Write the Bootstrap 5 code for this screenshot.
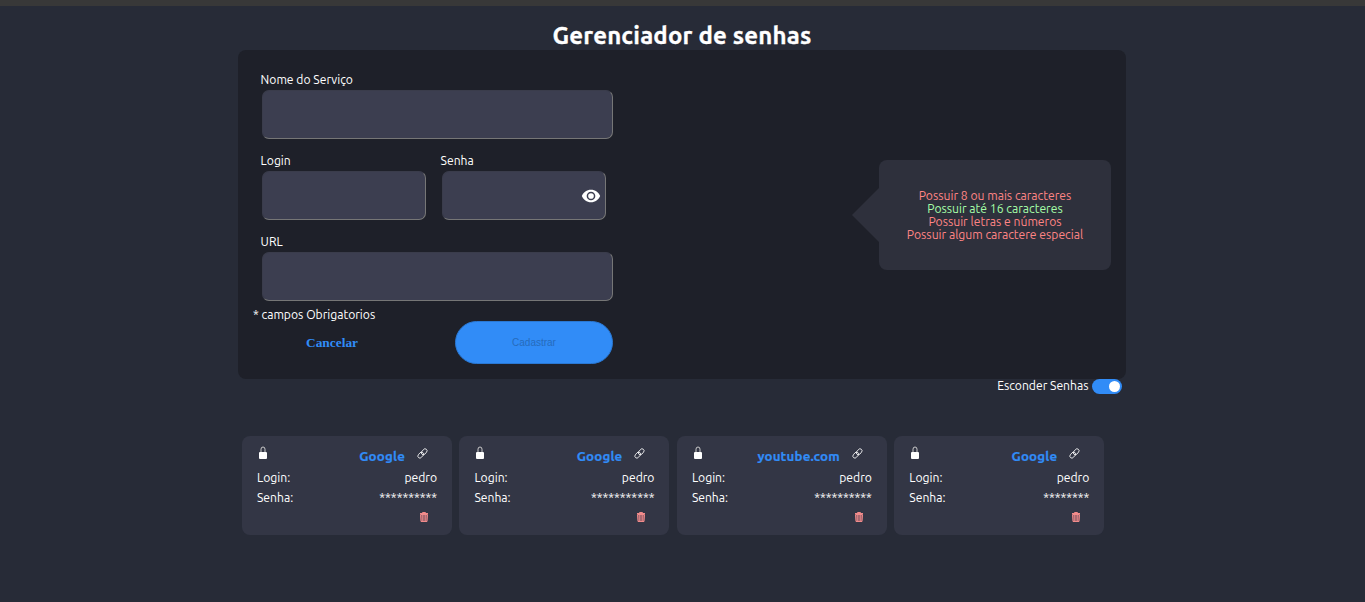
<!DOCTYPE html>
<html lang="pt-BR">
<head>
<meta charset="utf-8">
<meta name="viewport" content="width=device-width, initial-scale=1">
<title>Gerenciador de senhas</title>
<link rel="stylesheet" href="https://cdn.jsdelivr.net/npm/bootstrap@5.3.0/dist/css/bootstrap.min.css">
<style>
  body { background: #272b37; color: #fff; font: 12.15px/15px Ubuntu, "Noto Sans", sans-serif; min-height: 602px; overflow: hidden; }
  .top-strip { height: 6px; background: #383838; }
  .page { width: 888px; margin-left: 238px; }
  h1 { font-size: 24px; line-height: 28px; font-weight: 700; letter-spacing: .17px; -webkit-text-stroke: .3px #fff; margin: 16px 0 0; }
  .panel { height: 329px; background: #1e2029; border-radius: 8px; padding: 22px 15px 15px; }
  .fields { width: 352px; margin-left: 8px; }
  .fields label { display: block; line-height: 15px; height: 18px; margin-left: -.4px; }
  .field-row { height: 81px; }
  .pair { gap: 15px; }
  .half { width: 165px; }
  .fields .form-control { height: 49px; margin-left: 1px; width: calc(100% - 1px); background: #3c3e50; color: #fff; border: 1px solid; border-color: #3a3c4b #767676 #767676 #3a3c4b; border-radius: 7px; font-size: 13px; }
  .eye { position: absolute; right: 5px; top: 33px; width: 20px; height: 20px; padding: 0; border: 0; background: none; line-height: 0; }
  .required-note { height: 14px; margin-top: -8px; }
  .actions { width: 360px; }
  .cancel { color: #318cf7; font: bold 13.4px/15px "Liberation Serif", serif; width: 158px; border: 0; background: none; padding: 0; }
  .submit { width: 158px; height: 43px; border: 1px solid #2a78d3; border-radius: 22px; background: #318cf7; color: #266bbb; font: 10px "Liberation Sans", Arial, sans-serif; padding: 0; }
  .rules { position: relative; width: 232px; height: 110px; margin-top: 88px; background: #2e303c; border-radius: 8px; color: #ff8585; line-height: 13px; }
  .rules::before { content: ""; position: absolute; left: -27px; top: 28px; border: 27px solid transparent; border-left: 0; border-right-color: #2e303c; }
  .rules .ok { color: #a6ffa8; }
  .hide-row { height: 15px; }
  .hide-row > span { margin-top: -1px; }
  .switch { width: 30px; height: 15px; border-radius: 8px; background: #318cf7; padding: 2px; margin: 0 4px 0 3.5px; }
  .switch span { display: block; width: 11px; height: 11px; border-radius: 50%; background: #fff; }
  .entries { margin: 42px 0 0 4px; gap: 7.45px; }
  .entry { width: 210px; height: 99px; flex: none; background: #333645; border-radius: 8px; padding: 10px 15px 0; }
  .entry .head { height: 24px; }
  .entry .site { color: #318cf7; font-weight: 700; font-size: 13.33px; letter-spacing: .16px; -webkit-text-stroke: .2px #318cf7; line-height: 20px; text-decoration: none; margin-top: 1px; }
  .entry .line { height: 20px; line-height: 15px; }
  .lock { margin: 0 auto 0 2px; }
  .chain { margin: 2px 9px 0 12px; }
  .trash { margin: 2px 8px 0 0; }
  svg { display: block; }
</style>
</head>
<body>
<div class="top-strip"></div>
<main class="page">
  <h1 class="text-center">Gerenciador de senhas</h1>
  <section class="panel d-flex justify-content-between">
    <form>
      <div class="fields">
        <div class="field-row"><label for="service">Nome do Serviço</label><input id="service" class="form-control"></div>
        <div class="field-row pair d-flex">
          <div class="half"><label for="login">Login</label><input id="login" class="form-control"></div>
          <div class="half position-relative"><label for="pass">Senha</label><input id="pass" type="password" class="form-control">
            <button class="eye" type="button" aria-label="Mostrar senha"><svg width="20" height="20" viewBox="0 0 24 24" fill="#fff"><path fill-rule="evenodd" d="M12 4.500C7 4.500 2.700 7.600 1 12c1.700 4.400 6 7.500 11 7.500s9.300-3.100 11-7.500c-1.700-4.400-6-7.500-11-7.500zM12 17.200a5.200 5.200 0 1 1 0-10.400 5.200 5.200 0 0 1 0 10.400zM12 8.600a3.400 3.400 0 1 0 0 6.800 3.400 3.400 0 0 0 0-6.800z"/></svg></button>
          </div>
        </div>
        <div class="field-row"><label for="url">URL</label><input id="url" class="form-control"></div>
      </div>
      <div class="required-note">* campos Obrigatorios</div>
      <div class="actions d-flex align-items-center justify-content-between">
        <button class="cancel" type="button">Cancelar</button>
        <button class="submit" type="submit">Cadastrar</button>
      </div>
    </form>
    <div class="rules d-flex flex-column align-items-center justify-content-center">
      <span>Possuir 8 ou mais caracteres</span>
      <span class="ok">Possuir até 16 caracteres</span>
      <span>Possuir letras e números</span>
      <span>Possuir algum caractere especial</span>
    </div>
  </section>
  <div class="hide-row d-flex justify-content-end"><span>Esconder Senhas</span><div class="switch d-flex justify-content-end" role="switch" aria-checked="true"><span></span></div></div>
  <section class="entries d-flex" id="entries"></section>
</main>
<template id="entry">
  <article class="entry">
    <div class="head d-flex">
      <svg class="lock" width="8" height="14" viewBox="0 0 8 14"><path d="M2 6.500V3.200a2 2.200 0 0 1 4 0v3.300" fill="none" stroke="#ccc" stroke-width="1"/><rect y="6" width="8" height="7" rx="1" fill="#fff"/></svg>
      <a class="site" href="#"></a>
      <svg class="chain" width="11" height="11" viewBox="0 0 11 11" fill="none" stroke="#fff" stroke-width=".8"><rect x="-3.300" y="-2" width="6.600" height="4" rx="2" transform="translate(3.700 7.100) rotate(-50)"/><rect x="-3.300" y="-2" width="6.600" height="4" rx="2" transform="translate(7.200 3.800) rotate(-50)"/></svg>
    </div>
    <div class="line d-flex justify-content-between"><span>Login:</span><span>pedro</span></div>
    <div class="line d-flex justify-content-between"><span>Senha:</span><span class="stars"></span></div>
    <div class="d-flex justify-content-end"><svg class="trash" width="10" height="10" viewBox="0 0 10 10"><path d="M1 1.500h8M3.500 1V.5h3V1" fill="none" stroke="#f18b8b"/><path d="M1.500 2.500h7L8 9.500H2z" fill="#9b626c" stroke="#f18b8b"/><path d="M3.700 3v6M6.300 3v6" stroke="#f18b8b" stroke-width=".8"/></svg></div>
  </article>
</template>
<script src="https://cdn.jsdelivr.net/npm/bootstrap@5.3.0/dist/js/bootstrap.bundle.min.js"></script>
<script>
  const entries = [["Google", 10], ["Google", 11], ["youtube.com", 10], ["Google", 8]];
  for (const [site, length] of entries) {
    const node = document.getElementById("entry").content.cloneNode(true);
    node.querySelector(".site").textContent = site;
    node.querySelector(".stars").textContent = "*".repeat(length);
    document.getElementById("entries").append(node);
  }
</script>
</body>
</html>
